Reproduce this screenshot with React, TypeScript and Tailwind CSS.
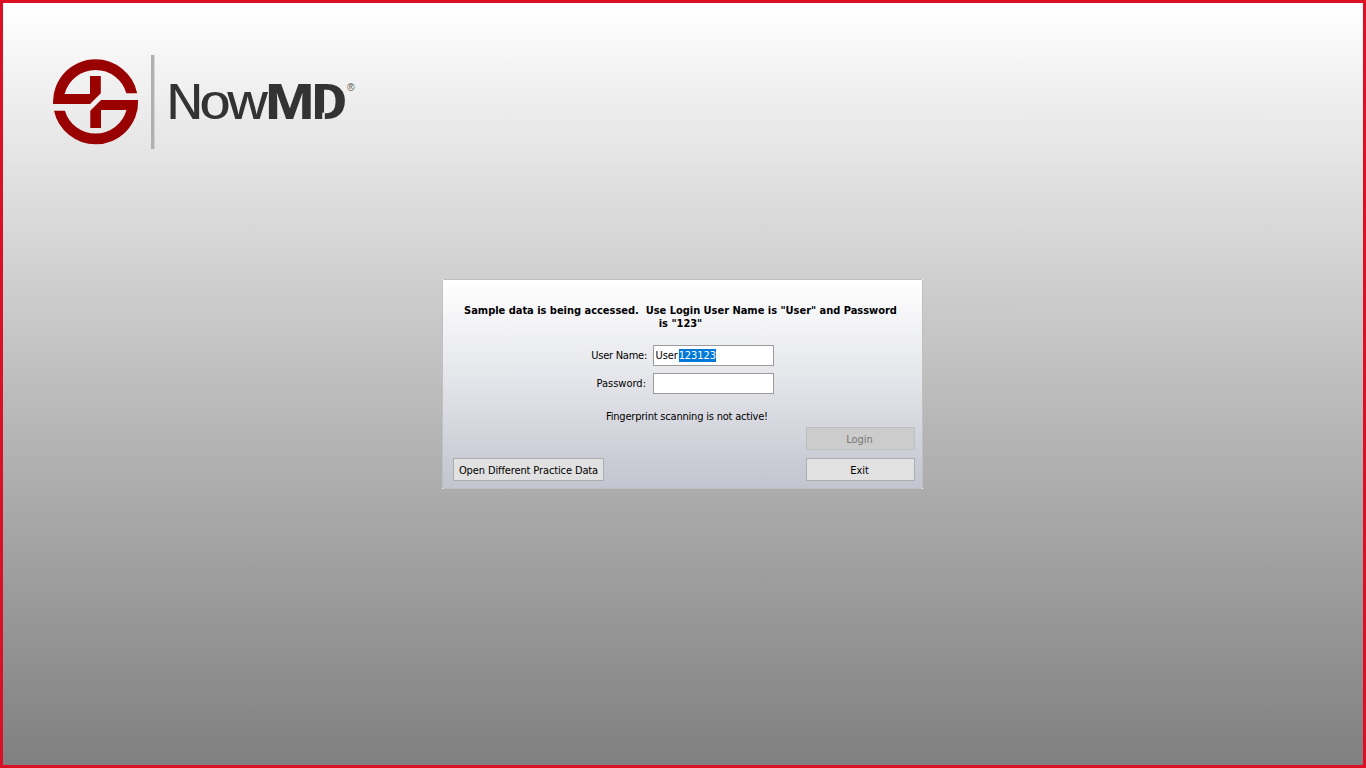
import React from "react";

const face = "font-['DejaVu_Sans_Condensed','DejaVu_Sans',sans-serif] [font-stretch:condensed]";

function Logo() {
  return (
    <svg width="306" height="96" viewBox="51 54 306 96" className="block" role="img" aria-label="NowMD">
      <g fill="#990000">
        <path d="M53.1 104A42.5 42.5 0 0 1 95.6 59.3A42.5 42.5 0 0 1 137.2 93.3H126.4A32 32 0 0 0 95.6 70A32 32 0 0 0 64.6 94H90V76H100.8V93.3L90 104Z" />
        <path d="M138.1 100A42.5 42.5 0 0 1 95.6 144.3A42.5 42.5 0 0 1 54 110.7H64.9A32 32 0 0 0 95.6 133.6A32 32 0 0 0 126.5 110H101V128H90.3V110.7L101 100Z" />
      </g>
      <rect x="151" y="55" width="3.4" height="94" fill="#b0b0b0" />
      <g fill="#333333" fontFamily="'Open Sans', sans-serif" fontSize="49">
        <text x="165.6" y="119" textLength="38.6" lengthAdjust="spacingAndGlyphs">N</text>
        <text x="198.4" y="119" textLength="33.2" lengthAdjust="spacingAndGlyphs">o</text>
        <text x="226.4" y="119" textLength="42.2" lengthAdjust="spacingAndGlyphs">w</text>
        <text x="264.7" y="119" fontWeight="700" textLength="50.1" lengthAdjust="spacingAndGlyphs">M</text>
        <text x="310.8" y="119" fontWeight="700" textLength="37" lengthAdjust="spacingAndGlyphs">D</text>
      </g>
      <rect x="322.2" y="112.6" width="2.6" height="7" fill="#ebebeb" />
      <text x="347" y="91" fontSize="10.5" fill="#555" fontFamily="'Liberation Sans', sans-serif">®</text>
    </svg>
  );
}

export default function App() {
  return (
    <div className={`flex h-[768px] w-[1366px] flex-col items-start overflow-hidden border-[3px] border-[#dc1024] bg-linear-to-b from-white to-[#808080] text-[11px] leading-[13px] text-black ${face}`}>
      <div className="mt-[51px] ml-12 h-24 shrink-0">
        <Logo />
      </div>
      <main className="relative mt-[129px] ml-[439px] flex h-[210px] w-[481px] shrink-0 flex-col border border-[#c0c0c0] bg-linear-to-b from-white via-[#e3e4e9] to-[#c2c4cf]">
        <i className="absolute -top-px -left-px size-px bg-[#f4f4f4]" />
        <i className="absolute -top-px -right-px size-px bg-[#f4f4f4]" />
        <i className="absolute -bottom-px -left-px size-px bg-[#f4f4f4]" />
        <i className="absolute -right-px -bottom-px size-px bg-[#f4f4f4]" />
        <div className="mt-6 ml-[21px] flex w-[433px] flex-col items-center font-bold tracking-[-0.02px] whitespace-pre">
          <p>Sample data is being accessed.  Use Login User Name is "User" and Password</p>
          <p>is "123"</p>
        </div>
        <div className="mt-[15px] flex h-[21px] items-center">
          <label className="w-[204px] text-right tracking-[-0.25px]">User Name:</label>
          <div className="ml-[6px] flex h-[21px] w-[121px] items-center border border-[#9b9b9f] bg-white pl-[1.5px] tracking-[-0.1px]">
            <span>User</span>
            <span className="ml-px bg-[#0078d7] text-white">123123</span>
          </div>
        </div>
        <div className="mt-[7px] flex h-[21px] items-center">
          <label className="w-[203px] text-right">Password:</label>
          <div className="ml-[7px] h-[21px] w-[121px] border border-[#9b9b9f] bg-white" />
        </div>
        <p className="mt-[16px] ml-[163px] tracking-[-0.2px]">Fingerprint scanning is not active!</p>
        <div className="mt-[4px] mr-[7px] flex flex-col items-end">
          <button className="h-[23px] w-[109px] border border-[#bfbfbf] bg-[#cccccc] pt-px pr-[2px] text-[#777]">Login</button>
          <div className="mt-2 ml-[10px] flex justify-between self-stretch">
            <button className="h-[23px] w-[151px] border border-[#adadad] bg-[#e1e1e1] pt-px tracking-[-0.12px] whitespace-nowrap">Open Different Practice Data</button>
            <button className="h-[23px] w-[109px] border border-[#adadad] bg-[#e1e1e1] pt-px pr-[2px]">Exit</button>
          </div>
        </div>
      </main>
    </div>
  );
}
